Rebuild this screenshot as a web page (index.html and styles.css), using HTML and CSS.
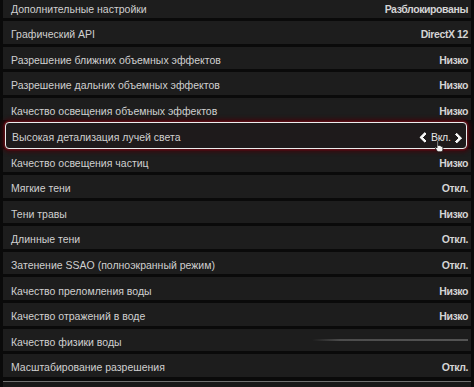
FILE: index.html
```html
<!DOCTYPE html>
<html lang="ru">

<head>
    <meta charset="UTF-8">
    <meta name="viewport" content="width=device-width, initial-scale=1.0">
    <title>Настройки графики</title>
    <link rel="stylesheet" href="styles.css">
</head>

<body>
    <div class="settings">
        <div class="row"><span class="label">Дополнительные настройки</span><span class="value">Разблокированы</span></div>
        <div class="row"><span class="label">Графический API</span><span class="value">DirectX 12</span></div>
        <div class="row"><span class="label">Разрешение ближних объемных эффектов</span><span class="value">Низко</span></div>
        <div class="row"><span class="label">Разрешение дальних объемных эффектов</span><span class="value">Низко</span></div>
        <div class="row"><span class="label">Качество освещения объемных эффектов</span><span class="value">Низко</span></div>
        <div class="row active">
            <span class="label">Высокая детализация лучей света</span>
            <span class="switcher">
                <i class="arrow prev"></i>
                <span class="state">Вкл.</span>
                <i class="arrow next"></i>
            </span>
            <svg class="cursor" width="10" height="13" viewBox="0 0 10 13">
                <path d="M3 1.2 C3 0.6 4.2 0.6 4.2 1.2 L4.2 5.5 L5 5.3 C5.6 5.2 5.9 5.5 6 5.9 L6.6 5.8 C7.2 5.8 7.5 6.1 7.5 6.5 L8 6.5 C8.6 6.6 8.9 7 8.9 7.5 L8.9 9.5 C8.9 10.8 8 11.8 6.8 11.8 L4.6 11.8 C3.8 11.8 3.2 11.3 2.8 10.6 L1.2 7.8 C0.9 7.2 1.5 6.7 2 7 L3 8 Z" />
            </svg>
        </div>
        <div class="row"><span class="label">Качество освещения частиц</span><span class="value">Низко</span></div>
        <div class="row"><span class="label">Мягкие тени</span><span class="value">Откл.</span></div>
        <div class="row"><span class="label">Тени травы</span><span class="value">Низко</span></div>
        <div class="row"><span class="label">Длинные тени</span><span class="value">Откл.</span></div>
        <div class="row"><span class="label">Затенение SSAO (полноэкранный режим)</span><span class="value">Откл.</span></div>
        <div class="row"><span class="label">Качество преломления воды</span><span class="value">Низко</span></div>
        <div class="row"><span class="label">Качество отражений в воде</span><span class="value">Низко</span></div>
        <div class="row"><span class="label">Качество физики воды</span><span class="slider"></span></div>
        <div class="row"><span class="label">Масштабирование разрешения</span><span class="value">Откл.</span></div>
        <div class="row last"></div>
    </div>
</body>

</html>
```

FILE: styles.css
```css
* {
    box-sizing: border-box;
    padding: 0;
    margin: 0px;
}

body {
    background-color: #0a0a0a;
    font-family: "Liberation Sans", Arial, sans-serif;
    overflow: hidden;
}

.settings {
    display: flex;
    flex-direction: column;
    gap: 3px;
    padding: 0 3px;
    margin-top: -4.6px;
}

.row {
    position: relative;
    display: flex;
    align-items: center;
    justify-content: space-between;
    height: 22.6px;
    padding: 4px 3px 0 8px;
    background-color: #1d1d1d;
    flex-shrink: 0;
}

.label {
    font-size: 10.5px;
    color: #d0d0d0;
}

.value {
    font-size: 10.5px;
    font-weight: 700;
    letter-spacing: -0.4px;
    color: #d4d4d4;
}

/* selected row */
.row.active {
    z-index: 1;
    height: 27px;
    margin: -1px 4px -3px 2px;
    padding: 3px 4px 0 6px;
    border: 1.5px solid #ececec;
    border-radius: 4px;
    background-color: #1e1a1b;
    box-shadow: 0 0 0 1.5px #560d15, 0 0 4px 3px #3a080d;
}

.switcher {
    display: flex;
    align-items: center;
    gap: 2px;
}

.state {
    font-size: 10.5px;
    color: #e4e4e4;
    letter-spacing: -0.3px;
}

/* chevrons drawn with borders */
.arrow {
    display: block;
    width: 7.5px;
    height: 7.5px;
    border-top: 3px solid #f6f6f6;
    border-right: 3px solid #f6f6f6;
    border-radius: 1px;
}

.arrow.prev {
    transform: rotate(-135deg);
    margin: 0 0 0 3px;
}

.arrow.next {
    transform: rotate(45deg);
    margin: 0 2px 0 0;
}

.cursor {
    position: absolute;
    left: 428px;
    top: 17px;
}

.cursor path {
    fill: #f4f4f4;
    stroke: #111;
    stroke-width: 0.8;
}

.slider {
    width: 156px;
    height: 2px;
    margin-top: -3px;
    background: linear-gradient(to right, rgba(90, 90, 90, 0), #4c4c4c 18%, #545454);
}

.row.last {
    margin-top: 1px;
    border-top: 1px solid #707070;
    background-color: #181818;
}
```
